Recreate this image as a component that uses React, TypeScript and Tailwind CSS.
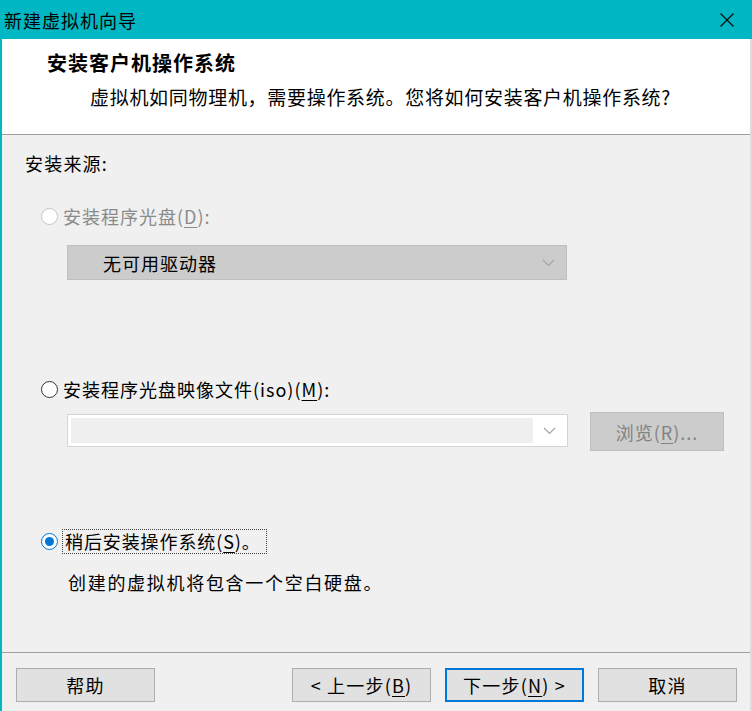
import React from "react";

const font = { fontFamily: '"Noto Sans CJK SC", "Microsoft YaHei", sans-serif' };

function Chevron() {
  return (
    <svg width="13" height="8" viewBox="0 0 13 8" fill="none">
      <polyline points="1,1 6.5,6.5 12,1" stroke="#a6a6a6" strokeWidth="1.2" />
    </svg>
  );
}

function Radio({ state }: { state: "disabled" | "off" | "on" }) {
  if (state === "on") {
    return (
      <span className="flex h-[17px] w-[17px] items-center justify-center rounded-full border border-[#0078d7] bg-white">
        <span className="h-[9px] w-[9px] rounded-full bg-[#0078d7]" />
      </span>
    );
  }
  return (
    <span
      className={
        state === "disabled"
          ? "h-[17px] w-[17px] rounded-full border border-[#c4c4c4] bg-white"
          : "h-[17px] w-[17px] rounded-full border border-[#333333] bg-white"
      }
    />
  );
}

function Btn({ children, primary }: { children: React.ReactNode; primary?: boolean }) {
  return (
    <div
      className={
        primary
          ? "flex h-[34px] w-[139px] items-center justify-center border-2 border-[#0078d7] bg-[#e1e1e1] text-[18px] tracking-[1.2px] text-black"
          : "flex h-[34px] w-[139px] items-center justify-center border border-[#adadad] bg-[#e1e1e1] text-[18px] tracking-[1.2px] text-black"
      }
    >
      {children}
    </div>
  );
}

export default function App() {
  return (
    <div className="flex h-[711px] w-[752px] flex-col overflow-hidden bg-[#f0f0f0] leading-[24px]" style={font}>
      {/* title bar */}
      <div className="flex h-[39px] shrink-0 items-center justify-between bg-[#00b7c3] pl-[4px] pr-[18px]">
        <span className="text-[18px] tracking-[1px] text-black">新建虚拟机向导</span>
        <svg width="14" height="14" viewBox="0 0 14 14">
          <line x1="0.5" y1="0.5" x2="13.5" y2="13.5" stroke="#111" strokeWidth="1.3" />
          <line x1="13.5" y1="0.5" x2="0.5" y2="13.5" stroke="#111" strokeWidth="1.3" />
        </svg>
      </div>

      <div className="flex flex-1 flex-col border-l-2 border-r-2 border-l-[#00b7c3] border-r-[#dcdcdc]">
        {/* header */}
        <div className="flex h-[96px] shrink-0 flex-col border-b border-[#a0a0a0] bg-white">
          <div className="ml-[45px] mt-[12px] text-[20px] font-bold tracking-[1px] text-black">安装客户机操作系统</div>
          <div className="ml-[88px] mt-[10px] text-[19px] tracking-[0.7px] text-black">
            虚拟机如同物理机，需要操作系统。您将如何安装客户机操作系统?
          </div>
        </div>

        {/* content */}
        <div className="flex flex-1 flex-col">
          <div className="ml-[23px] mt-[16px] text-[18px] tracking-[1.2px] text-black">安装来源:</div>

          <div className="ml-[39px] mt-[29px] flex h-[24px] items-center gap-[5px]">
            <Radio state="disabled" />
            <span className="text-[18px] tracking-[1px] text-[#8a8a8a]">
              安装程序光盘(<span className="underline underline-offset-[3px]">D</span>):
            </span>
          </div>

          <div className="ml-[65px] mt-[17px] flex h-[35px] w-[500px] items-center justify-between border border-[#bfbfbf] bg-[#cccccc] pl-[35px] pr-[11px]">
            <span className="text-[18px] tracking-[1px] text-black">无可用驱动器</span>
            <Chevron />
          </div>

          <div className="ml-[39px] mt-[97px] flex h-[24px] items-center gap-[5px]">
            <Radio state="off" />
            <span className="text-[18px] tracking-[1px] text-black">
              安装程序光盘映像文件(iso)(<span className="underline underline-offset-[3px]">M</span>):
            </span>
          </div>

          <div className="ml-[65px] mt-[11px] flex items-start">
            <div className="mt-[2px] flex h-[33px] w-[501px] items-center border border-[#d4d4d4] bg-white p-[3px]">
              <div className="h-full flex-1 bg-[#efefef]" />
              <div className="flex w-[31px] items-center justify-center pl-[2px]">
                <Chevron />
              </div>
            </div>
            <div className="ml-[22px] flex h-[39px] w-[134px] items-center justify-center border border-[#bfbfbf] bg-[#cccccc] text-[18px] tracking-[1px] text-[#838383]">
              浏览(<span className="underline underline-offset-[3px]">R</span>)...
            </div>
          </div>

          <div className="ml-[39px] mt-[78px] flex h-[25px] items-center gap-[4px]">
            <Radio state="on" />
            <span className="border border-dotted border-[#444] pl-[2px] pr-[5px] text-[18px] leading-[23px] tracking-[0.9px] text-black">
              稍后安装操作系统(<span className="underline underline-offset-[3px]">S</span>)。
            </span>
          </div>

          <div className="ml-[66px] mt-[16px] text-[18px] tracking-[1.7px] text-black">创建的虚拟机将包含一个空白硬盘。</div>

          <div className="flex-1" />

          {/* footer */}
          <div className="flex h-[59px] shrink-0 items-start border-t border-[#a0a0a0] pl-[14px] pr-[13px] pt-[15px]">
            <Btn>帮助</Btn>
            <div className="flex-1" />
            <div className="flex gap-[14px]">
              <Btn>
                &lt; 上一步(<span className="underline underline-offset-[3px]">B</span>)
              </Btn>
              <Btn primary>
                下一步(<span className="underline underline-offset-[3px]">N</span>) &gt;
              </Btn>
              <Btn>取消</Btn>
            </div>
          </div>
        </div>
      </div>
    </div>
  );
}
